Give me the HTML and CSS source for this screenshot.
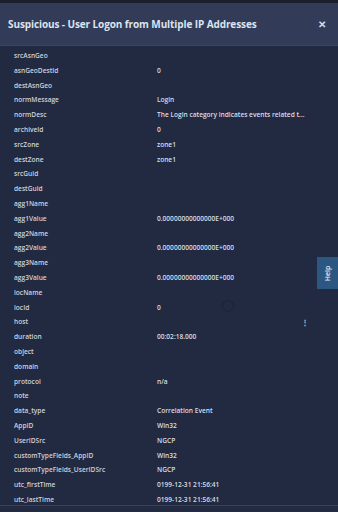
FILE: index.html
```html
<!DOCTYPE html>
<html lang="en">
<head>
    <meta charset="UTF-8">
    <meta name="viewport" content="width=device-width, initial-scale=1.0">
    <title>Event Details</title>
    <link rel="stylesheet" href="styles.css">
</head>
<body>

<div class="topbar"></div>

<div class="header">
    <h1>Suspicious - User Logon from Multiple IP Addresses</h1>
    <span class="close">&#x2715;</span>
</div>

<div class="fields">
    <div class="row"><span class="key">srcAsnGeo</span><span class="val"></span></div>
    <div class="row"><span class="key">asnGeoDestId</span><span class="val">0</span></div>
    <div class="row"><span class="key">destAsnGeo</span><span class="val"></span></div>
    <div class="row"><span class="key">normMessage</span><span class="val">Login</span></div>
    <div class="row"><span class="key">normDesc</span><span class="val">The Login category indicates events related t...</span></div>
    <div class="row"><span class="key">archiveId</span><span class="val">0</span></div>
    <div class="row"><span class="key">srcZone</span><span class="val">zone1</span></div>
    <div class="row"><span class="key">destZone</span><span class="val">zone1</span></div>
    <div class="row"><span class="key">srcGuid</span><span class="val"></span></div>
    <div class="row"><span class="key">destGuid</span><span class="val"></span></div>
    <div class="row"><span class="key">agg1Name</span><span class="val"></span></div>
    <div class="row"><span class="key">agg1Value</span><span class="val">0.00000000000000E+000</span></div>
    <div class="row"><span class="key">agg2Name</span><span class="val"></span></div>
    <div class="row"><span class="key">agg2Value</span><span class="val">0.00000000000000E+000</span></div>
    <div class="row"><span class="key">agg3Name</span><span class="val"></span></div>
    <div class="row"><span class="key">agg3Value</span><span class="val">0.00000000000000E+000</span></div>
    <div class="row"><span class="key">locName</span><span class="val"></span></div>
    <div class="row"><span class="key">locId</span><span class="val">0</span></div>
    <div class="row"><span class="key">host</span><span class="val"></span><span class="more">&#8942;</span></div>
    <div class="row"><span class="key">duration</span><span class="val">00:02:18.000</span></div>
    <div class="row"><span class="key">object</span><span class="val"></span></div>
    <div class="row"><span class="key">domain</span><span class="val"></span></div>
    <div class="row"><span class="key">protocol</span><span class="val">n/a</span></div>
    <div class="row"><span class="key">note</span><span class="val"></span></div>
    <div class="row"><span class="key">data_type</span><span class="val">Correlation Event</span></div>
    <div class="row"><span class="key">AppID</span><span class="val">Win32</span></div>
    <div class="row"><span class="key">UserIDSrc</span><span class="val">NGCP</span></div>
    <div class="row"><span class="key">customTypeFields_AppID</span><span class="val">Win32</span></div>
    <div class="row"><span class="key">customTypeFields_UserIDSrc</span><span class="val">NGCP</span></div>
    <div class="row"><span class="key">utc_firstTime</span><span class="val">0199-12-31 21:56:41</span></div>
    <div class="row"><span class="key">utc_lastTime</span><span class="val">0199-12-31 21:56:41</span></div>
</div>

<div class="footer"></div>

<div class="spinner"></div>
<div class="help-tab"><span>Help</span></div>

</body>
</html>
```

FILE: styles.css
```css
body {
    margin: 0;
    padding: 0;
    background-color: #222a41;
    font-family: "Open Sans", Arial, sans-serif;
    color: #d3d8e2;
    height: 512px;
    overflow: hidden;
    position: relative;
}

.topbar {
    height: 3px;
    background-color: #1b1f2c;
}

.header {
    height: 42px;
    background-color: #323c59;
    border-bottom: 1px solid #3a4563;
    display: flex;
    align-items: center;
    justify-content: space-between;
    padding: 0 12px 0 8px;
}

h1 {
    margin: 0;
    font-size: 10px;
    font-weight: 700;
    color: #dde3ef;
    letter-spacing: -0.1px;
    white-space: nowrap;
}

.close {
    font-size: 10px;
    font-weight: 600;
    color: #d6dcea;
}

.fields {
    height: 459px;
    overflow: hidden;
    padding-top: 2px;
    box-sizing: border-box;
}

.row {
    display: grid;
    grid-template-columns: 143px 143px 10px;
    align-items: start;
    height: 14.8px;
    box-sizing: border-box;
    padding: 4px 0 0 14px;
    font-size: 6.6px;
    line-height: 8px;
    font-weight: 600;
}

.key {
    color: #cdd2de;
}

.val {
    white-space: nowrap;
    color: #d8dde6;
}

.more {
    text-align: center;
    font-size: 8px;
    color: #b9c0cf;
}

.footer {
    border-top: 1px solid #39425b;
    height: 6px;
    background-color: #232b42;
}

.spinner {
    position: absolute;
    left: 222px;
    top: 300px;
    width: 10px;
    height: 10px;
    border: 1.5px solid rgba(15, 20, 34, 0.35);
    border-radius: 50%;
}

.help-tab {
    position: absolute;
    right: 0;
    top: 257px;
    width: 21px;
    height: 32px;
    background-color: #2c5782;
    display: flex;
    align-items: center;
    justify-content: center;
}

.help-tab span {
    transform: rotate(-90deg);
    font-size: 7px;
    font-weight: 600;
    color: #e4ebf4;
}
```
